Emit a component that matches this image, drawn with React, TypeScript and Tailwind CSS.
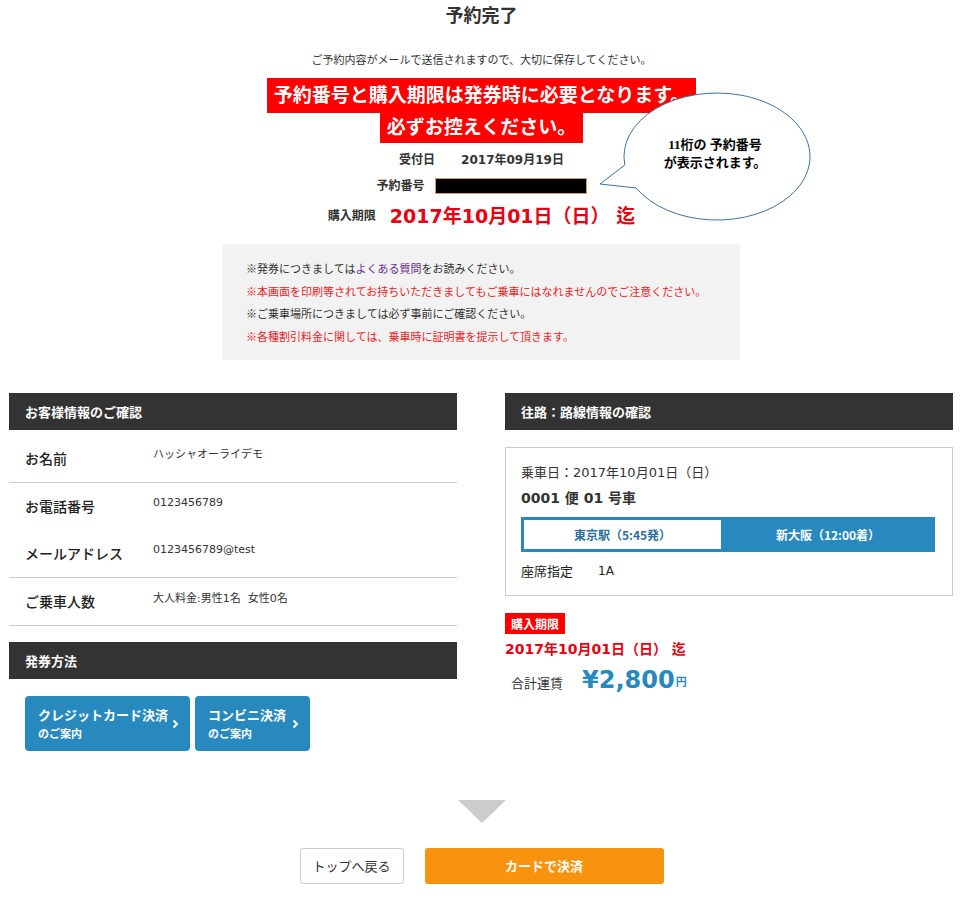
import React from "react";

const font = { fontFamily: '"DejaVu Sans", "Noto Sans CJK JP", sans-serif' };
const noto = { fontFamily: '"Noto Sans CJK JP", "Noto Sans", sans-serif' };

function Chevron() {
  return (
    <svg width="7" height="10" viewBox="0 0 7 10" className="shrink-0">
      <path d="M1.5 1.5 L5 5 L1.5 8.5" fill="none" stroke="white" strokeWidth="2" />
    </svg>
  );
}

export default function App() {
  return (
    <div className="relative w-[963px] min-h-[899px] bg-white text-[#333]" style={font}>
      {/* Top section */}
      <div className="flex flex-col items-center">
        <h1 className="pt-[4px] text-[18px] leading-[24px] font-bold text-[#333]">予約完了</h1>
        <p className="mt-[25px] text-[11px] leading-[16px] text-[#333]">
          ご予約内容がメールで送信されますので、大切に保存してください。
        </p>
        <div className="mt-[9px] flex flex-col items-center">
          <div className="h-[35px] bg-[#ff0000] px-[7px] text-[19px] leading-[35px] font-bold text-white">
            予約番号と購入期限は発券時に必要となります。
          </div>
          <div className="h-[30px] bg-[#ff0000] px-[7px] text-[19px] leading-[28px] font-bold text-white">
            必ずお控えください。
          </div>
        </div>
        <div className="mt-[8px] flex items-center gap-[26px] text-[12px] leading-[18px] font-bold">
          <span>受付日</span>
          <span>2017年09月19日</span>
        </div>
        <div className="mt-[8px] flex items-center gap-[10px] text-[12px] leading-[18px] font-bold">
          <span>予約番号</span>
          <span className="block h-[16px] w-[152px] border border-[#d09a68] bg-black" />
        </div>
        <div className="mt-[8px] flex items-center gap-[14px] leading-[26px]">
          <span className="text-[12px] font-bold">購入期限</span>
          <span className="text-[19px] font-bold text-[#e60012]">2017年10月01日（日） 迄</span>
        </div>
        <div className="mt-[15px] h-[116px] w-[517px] bg-[#f2f2f2] pl-[23px] pt-[13px] text-[11px] leading-[22.5px]" style={noto}>
          <p className="text-[#333]">
            ※発券につきましては<span className="text-[#6b2c8f]">よくある質問</span>をお読みください。
          </p>
          <p className="text-[#ee1c25]">※本画面を印刷等されてお持ちいただきましてもご乗車にはなれませんのでご注意ください。</p>
          <p className="text-[#333]">※ご乗車場所につきましては必ず事前にご確認ください。</p>
          <p className="text-[#ee1c25]">※各種割引料金に関しては、乗車時に証明書を提示して頂きます。</p>
        </div>
      </div>

      {/* Speech bubble overlay */}
      <svg className="absolute left-[595px] top-[90px]" width="220" height="135" viewBox="0 0 220 135">
        <path
          d="M 29.8 75 A 93 63.5 0 1 1 41.2 98 L 5 94 Z"
          fill="white"
          stroke="#41719c"
          strokeWidth="1"
        />
      </svg>
      <div
        className="absolute left-[622px] top-[136px] w-[186px] text-center text-[13px] leading-[18px] font-bold text-black"
        style={{ fontFamily: '"Liberation Serif", "Noto Sans CJK JP", serif' }}
      >
        <div>11桁の 予約番号</div>
        <div>が表示されます。</div>
      </div>

      {/* Columns */}
      <div className="mt-[33px] grid grid-cols-2 gap-[48px] pl-[9px] pr-[10px]">
        {/* Left */}
        <div>
          <div className="flex h-[37px] items-center bg-[#333] pl-[16px] text-[13px] font-bold text-white" style={noto}>
            お客様情報のご確認
          </div>
          <div className="border-b border-[#ccc]">
            <div className="flex h-[52px] items-center pt-[4px]">
              <span className="w-[144px] pl-[16px] text-[14px] font-medium text-[#222]" style={noto}>お名前</span>
              <span className="mb-[5px] text-[11px] text-[#333]">ハッシャオーライデモ</span>
            </div>
          </div>
          <div className="border-b border-[#ccc]">
            <div className="flex h-[46px] items-center">
              <span className="w-[144px] pl-[16px] text-[14px] font-medium text-[#222]" style={noto}>お電話番号</span>
              <span className="mb-[5px] text-[11px] text-[#333]">0123456789</span>
            </div>
            <div className="flex h-[48px] items-center">
              <span className="w-[144px] pl-[16px] text-[14px] font-medium text-[#222]" style={noto}>メールアドレス</span>
              <span className="mb-[5px] text-[11px] text-[#333]">0123456789@test</span>
            </div>
          </div>
          <div className="border-b border-[#ccc]">
            <div className="flex h-[47px] items-center">
              <span className="w-[144px] pl-[16px] text-[14px] font-medium text-[#222]" style={noto}>ご乗車人数</span>
              <span className="mb-[4px] text-[11px] text-[#333]">大人料金:男性1名&nbsp;&nbsp;女性0名</span>
            </div>
          </div>
          <div className="mt-[16px] flex h-[37px] items-center bg-[#333] pl-[16px] text-[13px] font-bold text-white" style={noto}>
            発券方法
          </div>
          <div className="mt-[17px] flex gap-[5px] pl-[16px]" style={noto}>
            <div className="flex h-[55px] w-[165px] items-center justify-between rounded-[4px] bg-[#2789bd] pl-[13px] pr-[11px] text-white">
              <div className="font-bold">
                <div className="text-[13px] leading-[18px]">クレジットカード決済</div>
                <div className="text-[11px] leading-[18px]">のご案内</div>
              </div>
              <Chevron />
            </div>
            <div className="flex h-[55px] w-[115px] items-center justify-between rounded-[4px] bg-[#2789bd] pl-[13px] pr-[11px] text-white">
              <div className="font-bold">
                <div className="text-[13px] leading-[18px]">コンビニ決済</div>
                <div className="text-[11px] leading-[18px]">のご案内</div>
              </div>
              <Chevron />
            </div>
          </div>
        </div>

        {/* Right */}
        <div>
          <div className="flex h-[37px] items-center bg-[#333] pl-[16px] text-[13px] font-bold text-white" style={noto}>
            往路：路線情報の確認
          </div>
          <div className="mt-[17px] border border-[#ccc] pb-[14px] pl-[15px] pr-[17px] pt-[15px]">
            <div className="text-[13px] leading-[20px] text-[#333]">乗車日：2017年10月01日（日）</div>
            <div className="mt-[5px] text-[14px] leading-[20px] font-bold text-[#333]">0001 便 01 号車</div>
            <div className="mt-[9px] flex h-[35px]" style={noto}>
              <div className="flex w-[200px] items-center justify-center border-[3px] border-r-0 border-[#2789bd] bg-white text-[12px] font-bold text-[#2d6f9c]">
                東京駅（5:45発）
              </div>
              <div className="flex flex-1 items-center justify-center bg-[#2789bd] text-[12px] font-bold text-white">
                新大阪（12:00着）
              </div>
            </div>
            <div className="mt-[9px] flex items-center text-[13px] leading-[20px] text-[#222]">
              <span className="w-[77px]" style={noto}>座席指定</span>
              <span className="text-[12px]">1A</span>
            </div>
          </div>
          <div className="mt-[17px] inline-flex h-[21px] items-center bg-[#ff0000] px-[6px] text-[12px] font-bold text-white" style={noto}>
            購入期限
          </div>
          <div className="text-[14px] leading-[26px] font-bold text-[#e60012]">2017年10月01日（日） 迄</div>
          <div className="mt-[2px] flex items-end pl-[6px]">
            <span className="mb-[3px] text-[13px] text-[#333]" style={noto}>合計運賃</span>
            <span className="ml-[19px] text-[24px] leading-[32px] font-bold text-[#2789bd]">¥2,800</span>
            <span className="mb-[4px] ml-[1px] text-[11px] font-bold text-[#2789bd]">円</span>
          </div>
        </div>
      </div>

      {/* Bottom */}
      <div className="mt-[49px] flex flex-col items-center">
        <div className="h-0 w-0 border-l-[24px] border-r-[24px] border-t-[23px] border-l-transparent border-r-transparent border-t-[#cccccc]" />
        <div className="mt-[25px] flex gap-[21px]" style={noto}>
          <div className="flex h-[36px] w-[104px] items-center justify-center rounded-[3px] border border-[#ccc] bg-white text-[13px] text-[#333]">
            トップへ戻る
          </div>
          <div className="flex h-[36px] w-[239px] items-center justify-center rounded-[3px] bg-[#f7930f] text-[13px] font-bold text-white">
            カードで決済
          </div>
        </div>
      </div>
    </div>
  );
}
